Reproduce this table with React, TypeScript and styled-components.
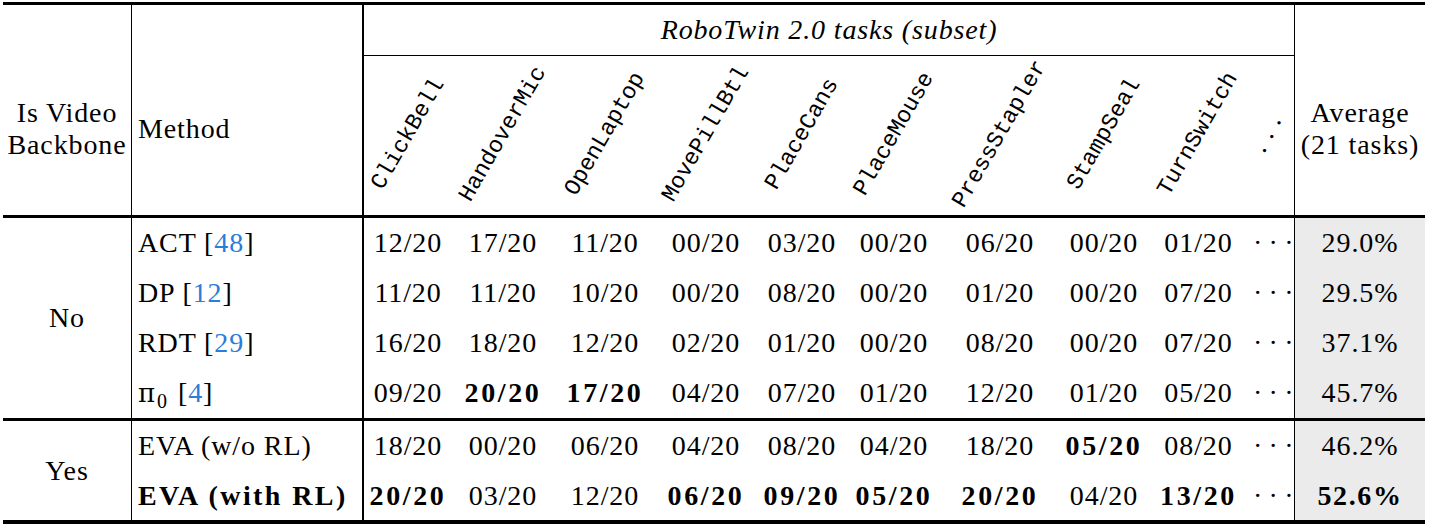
import React from 'react';
import styled, { createGlobalStyle, css } from 'styled-components';

const GlobalStyle = createGlobalStyle`
  html, body { margin: 0; padding: 0; background: #ffffff; }
  body {
    font-family: "Liberation Serif", "Times New Roman", serif;
    color: #000000;
  }
`;

const COLS =
  '129px 232px 88px 102px 102px 100px 92px 92px 120px 88px 101px 46px 130px';

const Table = styled.div`
  margin: 2px 0 0 3px;
  width: 1422px;
  border-top: 3px solid #000;
  border-bottom: 4px solid #000;
  font-size: 28px;
  letter-spacing: 0.9px;
`;

const Section = styled.div<{ $rows: string; $rule?: boolean }>`
  display: grid;
  grid-template-columns: ${COLS};
  grid-template-rows: ${(p) => p.$rows};
  ${(p) =>
    p.$rule &&
    css`
      border-bottom: 3px solid #000;
    `}
`;

const HeadBlock = styled.div<{ $col: string; $line: 1 | 2 | 0; $align?: 'center' | 'left' }>`
  grid-column: ${(p) => p.$col};
  grid-row: 1 / 3;
  display: flex;
  flex-direction: column;
  justify-content: center;
  align-items: ${(p) => (p.$align === 'left' ? 'flex-start' : 'center')};
  padding: 37px 0 0 ${(p) => (p.$align === 'left' ? '6px' : '0')};
  line-height: 32px;
  text-align: center;
  border-right: ${(p) => p.$line}px solid #000;
`;

const GroupTitle = styled.div`
  grid-column: 3 / 13;
  grid-row: 1;
  display: flex;
  align-items: center;
  justify-content: center;
  font-style: italic;
  letter-spacing: 0.85px;
  border-bottom: 1px solid #000;
  border-right: 1px solid #000;
  padding-bottom: 1px;
`;

const LabelCell = styled.div<{ $last?: boolean }>`
  grid-row: 2;
  display: flex;
  align-items: center;
  justify-content: center;
  min-width: 0;
  ${(p) =>
    p.$last &&
    css`
      border-right: 1px solid #000;
    `}
`;

const TaskLabel = styled.span`
  flex: none;
  white-space: nowrap;
  font-family: "Liberation Mono", "DejaVu Sans Mono", monospace;
  font-size: 23px;
  line-height: 16px;
  letter-spacing: 0;
  transform: translateY(-2px) rotate(-60deg);
`;

const DiagDots = styled.span`
  flex: none;
  white-space: nowrap;
  letter-spacing: 6.3px;
  line-height: 16px;
  transform: translate(2px, -2px) rotate(-62deg);
`;

const GroupCell = styled.div<{ $span: number }>`
  grid-column: 1;
  grid-row: 1 / ${(p) => p.$span + 1};
  display: flex;
  align-items: center;
  justify-content: center;
  border-right: 1px solid #000;
`;

const MethodCell = styled.div<{ $bold?: boolean }>`
  grid-column: 2;
  display: flex;
  align-items: center;
  padding-left: 6px;
  white-space: nowrap;
  border-right: 2px solid #000;
  ${(p) =>
    p.$bold &&
    css`
      font-weight: 700;
      letter-spacing: 2.4px;
    `}
`;

const MethodText = styled.span`
  white-space: nowrap;
`;

const Cite = styled.span`
  color: #2a7dd8;
`;

const Sub = styled.span`
  display: inline-block;
  font-size: 20px;
  transform: translateY(6px);
  margin: 0 10px 0 1px;
`;

const Pi = styled.span`
  font-family: "DejaVu Serif", "Liberation Serif", serif;
  font-size: 26px;
`;

const ValueCell = styled.div<{ $bold?: boolean }>`
  display: flex;
  align-items: center;
  justify-content: center;
  white-space: nowrap;
  ${(p) =>
    p.$bold &&
    css`
      font-weight: 700;
      letter-spacing: 2.6px;
    `}
`;

const DotsCell = styled.div`
  display: flex;
  align-items: center;
  padding-left: 4px;
  letter-spacing: 6.3px;
  border-right: 1px solid #000;
`;

const AvgCell = styled.div<{ $bold?: boolean }>`
  display: flex;
  align-items: center;
  justify-content: center;
  background: #ebebeb;
  ${(p) =>
    p.$bold &&
    css`
      font-weight: 700;
      letter-spacing: 1.6px;
    `}
`;

const tasks = [
  'ClickBell',
  'HandoverMic',
  'OpenLaptop',
  'MovePillBtl',
  'PlaceCans',
  'PlaceMouse',
  'PressStapler',
  'StampSeal',
  'TurnSwitch',
];

type Row = {
  method: React.ReactNode;
  bold?: boolean;
  vals: string[];
  avg: string;
};

const groupNo: Row[] = [
  {
    method: (
      <>
        ACT [<Cite>48</Cite>]
      </>
    ),
    vals: ['12/20', '17/20', '11/20', '00/20', '03/20', '00/20', '06/20', '00/20', '01/20'],
    avg: '29.0%',
  },
  {
    method: (
      <>
        DP [<Cite>12</Cite>]
      </>
    ),
    vals: ['11/20', '11/20', '10/20', '00/20', '08/20', '00/20', '01/20', '00/20', '07/20'],
    avg: '29.5%',
  },
  {
    method: (
      <>
        RDT [<Cite>29</Cite>]
      </>
    ),
    vals: ['16/20', '18/20', '12/20', '02/20', '01/20', '00/20', '08/20', '00/20', '07/20'],
    avg: '37.1%',
  },
  {
    method: (
      <>
        <Pi>π</Pi>
        <Sub>0</Sub>[<Cite>4</Cite>]
      </>
    ),
    vals: ['09/20', '*20/20', '*17/20', '04/20', '07/20', '01/20', '12/20', '01/20', '05/20'],
    avg: '45.7%',
  },
];

const groupYes: Row[] = [
  {
    method: 'EVA (w/o RL)',
    vals: ['18/20', '00/20', '06/20', '04/20', '08/20', '04/20', '18/20', '*05/20', '08/20'],
    avg: '46.2%',
  },
  {
    method: 'EVA (with RL)',
    bold: true,
    vals: ['*20/20', '03/20', '12/20', '*06/20', '*09/20', '*05/20', '*20/20', '04/20', '*13/20'],
    avg: '*52.6%',
  },
];

const DOTS = '···';

function BodyRows({ rows }: { rows: Row[] }) {
  return (
    <>
      {rows.map((r, i) => (
        <React.Fragment key={i}>
          <MethodCell $bold={r.bold}>
            <MethodText>{r.method}</MethodText>
          </MethodCell>
          {r.vals.map((v, j) => {
            const b = v.startsWith('*');
            return (
              <ValueCell key={j} $bold={b}>
                {b ? v.slice(1) : v}
              </ValueCell>
            );
          })}
          <DotsCell>{DOTS}</DotsCell>
          <AvgCell $bold={r.avg.startsWith('*')}>{r.avg.replace('*', '')}</AvgCell>
        </React.Fragment>
      ))}
    </>
  );
}

export default function App() {
  return (
    <>
      <GlobalStyle />
      <Table>
        <Section $rows="51px 159px" $rule>
          <HeadBlock $col="1" $line={1}>
            <span>Is Video</span>
            <span>Backbone</span>
          </HeadBlock>
          <HeadBlock $col="2" $line={2} $align="left">
            <span>Method</span>
          </HeadBlock>
          <GroupTitle>RoboTwin 2.0 tasks (subset)</GroupTitle>
          {tasks.map((t) => (
            <LabelCell key={t}>
              <TaskLabel>{t}</TaskLabel>
            </LabelCell>
          ))}
          <LabelCell $last>
            <DiagDots>{DOTS}</DiagDots>
          </LabelCell>
          <HeadBlock $col="13" $line={0}>
            <span>Average</span>
            <span>(21 tasks)</span>
          </HeadBlock>
        </Section>
        <Section $rows="repeat(4, 50px)" $rule>
          <GroupCell $span={4}>No</GroupCell>
          <BodyRows rows={groupNo} />
        </Section>
        <Section $rows="50px 49px">
          <GroupCell $span={2}>Yes</GroupCell>
          <BodyRows rows={groupYes} />
        </Section>
      </Table>
    </>
  );
}
